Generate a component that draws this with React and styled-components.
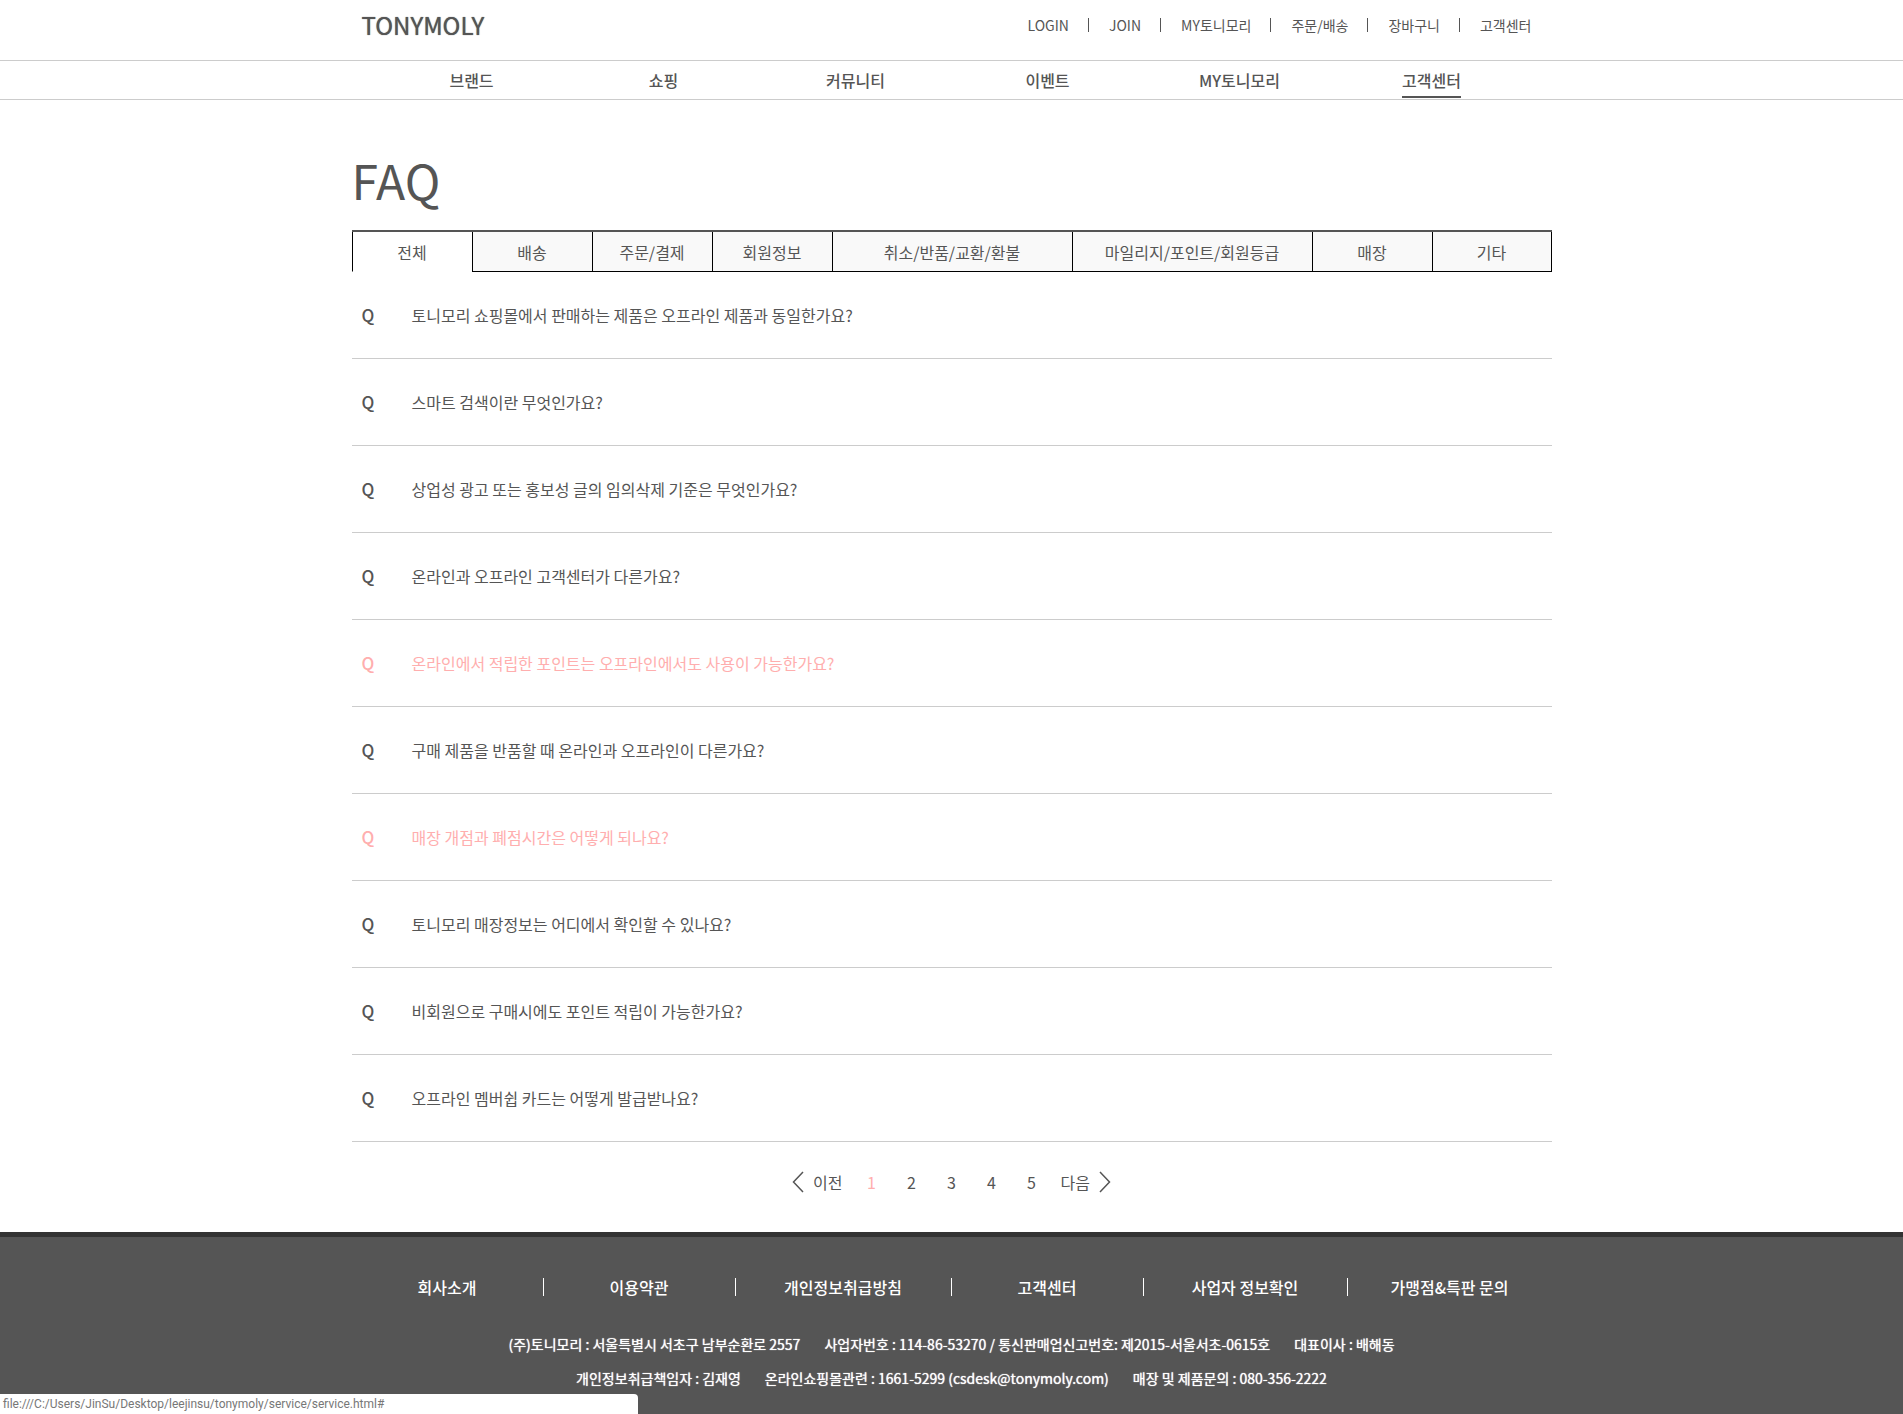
import React from "react";
import styled, { createGlobalStyle } from "styled-components";

const GlobalStyle = createGlobalStyle`
  *, *::before, *::after { box-sizing: border-box; }
  html { overflow: hidden auto; scrollbar-width: none; }
  body {
    margin: 0;
    background: #fff;
    color: #555;
    font-family: "Noto Sans CJK KR", "Noto Sans", sans-serif;
    font-size: 16px;
    line-height: 24px;
  }
  a { color: inherit; text-decoration: none; }
  ul, ol { margin: 0; padding: 0; list-style: none; }
  button { font: inherit; color: inherit; }
`;

const Page = styled.div`
  display: flex;
  flex-direction: column;
  min-height: 100vh;
`;

const Container = styled.div`
  width: 100%;
  max-width: 1200px;
  margin: 0 auto;
`;

const TopBar = styled(Container)`
  display: flex;
  justify-content: space-between;
  align-items: center;
  height: 60px;
  padding: 0 0 10px 10px;
`;

const Logo = styled.a`
  font-size: 24px;
  line-height: 36px;
  text-shadow: 0 0 1px #555;
`;

const UtilityList = styled.ul`
  display: flex;
  padding-right: 1px;
`;

const UtilityItem = styled.li`
  padding: 0 19px 0 20px;
  font-size: 14px;
  line-height: 14px;
  & + & { border-left: 1px solid #555; }
`;

const MainNav = styled.nav`
  border-top: 1px solid #ccc;
  border-bottom: 1px solid #ccc;
`;

const MainNavList = styled(Container).attrs({ as: "ul" })`
  display: grid;
  grid-template-columns: repeat(6, 1fr);
  padding: 0 24px;
  justify-items: center;
`;

const MainNavLink = styled.a`
  display: block;
  height: 37px;
  margin-bottom: 1px;
  line-height: 39px;
  font-weight: 500;
  border-bottom: 2px solid ${(p) => (p.$active ? "#555" : "transparent")};
`;

const Main = styled(Container).attrs({ as: "main" })`
  padding-top: 43px;
`;

const Title = styled.h1`
  margin: 0;
  font-size: 48px;
  font-weight: 400;
  line-height: 72px;
`;

const Tabs = styled.div`
  display: grid;
  grid-template-columns: repeat(4, 1fr) 2fr 2fr 1fr 1fr;
  margin-top: 15px;
  border-top: 2px solid #555;
`;

const Tab = styled.button`
  height: 40px;
  padding: 0;
  border: 0;
  border-left: 1px solid #000;
  border-bottom: 1px solid ${(p) => (p.$active ? "#fff" : "#000")};
  background: ${(p) => (p.$active ? "#fff" : "#f9f9f9")};
  cursor: pointer;
  &:last-child { border-right: 1px solid #000; }
`;

const QuestionItem = styled.li`
  border-bottom: 1px solid #ccc;
`;

const QuestionLink = styled.a`
  display: grid;
  grid-template-columns: 50px 1fr;
  align-items: center;
  height: 86px;
  padding-left: 10px;
  color: ${(p) => (p.$highlight ? "#ffaeae" : "inherit")};
`;

const QuestionMark = styled.strong`
  font-size: 17px;
  font-weight: 500;
`;

const Pagination = styled.nav`
  display: flex;
  justify-content: center;
  align-items: center;
  height: 90px;
  padding-bottom: 10px;
`;

const PageLink = styled.a`
  width: 40px;
  text-align: center;
  color: ${(p) => (p.$current ? "#ffaeae" : "inherit")};
`;

const StepLink = styled.a`
  display: flex;
  align-items: center;
  gap: 9px;
  margin: 0 9px;
`;

const Chevron = styled.svg`
  width: 12px;
  height: 22px;
  fill: none;
  stroke: #555;
  stroke-width: 1.5;
`;

const Footer = styled.footer`
  flex: 1;
  border-top: 5px solid #333;
  padding: 41px 0 18px;
  background: #555;
  color: #fff;
`;

const FooterLinks = styled(Container).attrs({ as: "ul" })`
  display: grid;
  grid-template-columns: 16fr 16fr 18fr 16fr 17fr 17fr;
  text-align: center;
  font-weight: 500;
`;

const FooterLinkItem = styled.li`
  line-height: 18px;
  border-right: 1px solid #fff;
  &:last-child { border-right: 0; }
`;

const CompanyInfo = styled.address`
  margin-top: 31px;
  font-size: 14px;
  font-style: normal;
  line-height: 34px;
  text-shadow: 0 0 1px #fff;
`;

const InfoLine = styled.div`
  display: flex;
  justify-content: center;
  gap: 24px;
`;

const StatusBar = styled.div`
  position: fixed;
  left: 0;
  bottom: 0;
  width: 638px;
  height: 20px;
  padding-left: 3px;
  border-top-right-radius: 4px;
  background: #fff;
  color: #777;
  font-family: Roboto, sans-serif;
  font-size: 12px;
  line-height: 20px;
`;

const utilities = ["LOGIN", "JOIN", "MY토니모리", "주문/배송", "장바구니", "고객센터"];
const menus = ["브랜드", "쇼핑", "커뮤니티", "이벤트", "MY토니모리", "고객센터"];
const tabs = ["전체", "배송", "주문/결제", "회원정보", "취소/반품/교환/환불", "마일리지/포인트/회원등급", "매장", "기타"];
const questions = [
  { text: "토니모리 쇼핑몰에서 판매하는 제품은 오프라인 제품과 동일한가요?" },
  { text: "스마트 검색이란 무엇인가요?" },
  { text: "상업성 광고 또는 홍보성 글의 임의삭제 기준은 무엇인가요?" },
  { text: "온라인과 오프라인 고객센터가 다른가요?" },
  { text: "온라인에서 적립한 포인트는 오프라인에서도 사용이 가능한가요?", highlight: true },
  { text: "구매 제품을 반품할 때 온라인과 오프라인이 다른가요?" },
  { text: "매장 개점과 폐점시간은 어떻게 되나요?", highlight: true },
  { text: "토니모리 매장정보는 어디에서 확인할 수 있나요?" },
  { text: "비회원으로 구매시에도 포인트 적립이 가능한가요?" },
  { text: "오프라인 멤버쉽 카드는 어떻게 발급받나요?" },
];
const pages = [1, 2, 3, 4, 5];
const footerLinks = ["회사소개", "이용약관", "개인정보취급방침", "고객센터", "사업자 정보확인", "가맹점&특판 문의"];
const companyInfo = [
  ["(주)토니모리 : 서울특별시 서초구 남부순환로 2557", "사업자번호 : 114-86-53270 / 통신판매업신고번호: 제2015-서울서초-0615호", "대표이사 : 배해동"],
  ["개인정보취급책임자 : 김재영", "온라인쇼핑몰관련 : 1661-5299 (csdesk@tonymoly.com)", "매장 및 제품문의 : 080-356-2222"],
];

export default function App() {
  return (
    <Page>
      <GlobalStyle />
      <header>
        <TopBar>
          <Logo href="#">TONYMOLY</Logo>
          <UtilityList>
            {utilities.map((label) => (
              <UtilityItem key={label}><a href="#">{label}</a></UtilityItem>
            ))}
          </UtilityList>
        </TopBar>
        <MainNav>
          <MainNavList>
            {menus.map((label) => (
              <li key={label}>
                <MainNavLink href="#" $active={label === "고객센터"}>{label}</MainNavLink>
              </li>
            ))}
          </MainNavList>
        </MainNav>
      </header>
      <Main>
        <Title>FAQ</Title>
        <Tabs role="tablist">
          {tabs.map((label, i) => (
            <Tab key={label} type="button" role="tab" aria-selected={i === 0} $active={i === 0}>{label}</Tab>
          ))}
        </Tabs>
        <ul>
          {questions.map(({ text, highlight }) => (
            <QuestionItem key={text}>
              <QuestionLink href="#" $highlight={highlight}>
                <QuestionMark>Q</QuestionMark>
                <span>{text}</span>
              </QuestionLink>
            </QuestionItem>
          ))}
        </ul>
        <Pagination>
          <StepLink href="#">
            <Chevron viewBox="0 0 12 22" aria-hidden="true"><path d="M11 1 L1.5 11 L11 21" /></Chevron>
            이전
          </StepLink>
          {pages.map((n) => (
            <PageLink key={n} href="#" $current={n === 1}>{n}</PageLink>
          ))}
          <StepLink href="#">
            다음
            <Chevron viewBox="0 0 12 22" aria-hidden="true"><path d="M1 1 L10.5 11 L1 21" /></Chevron>
          </StepLink>
        </Pagination>
      </Main>
      <Footer>
        <FooterLinks>
          {footerLinks.map((label) => (
            <FooterLinkItem key={label}><a href="#">{label}</a></FooterLinkItem>
          ))}
        </FooterLinks>
        <CompanyInfo>
          {companyInfo.map((line) => (
            <InfoLine key={line[0]}>
              {line.map((text) => <span key={text}>{text}</span>)}
            </InfoLine>
          ))}
        </CompanyInfo>
      </Footer>
      <StatusBar>file:///C:/Users/JinSu/Desktop/leejinsu/tonymoly/service/service.html#</StatusBar>
    </Page>
  );
}
